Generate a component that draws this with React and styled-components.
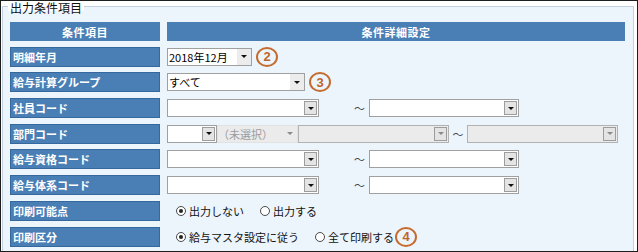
import React from "react";
import styled, { createGlobalStyle } from "styled-components";

const Global = createGlobalStyle`
  html, body { margin: 0; padding: 0; background: #fff; }
  body { font-family: "Noto Sans CJK JP", "Noto Sans", sans-serif; }
`;

const Frame = styled.div`
  width: 638px;
  height: 252px;
  box-sizing: border-box;
  border: 1px solid #1e1e1e;
  background: #fff;
  overflow: hidden;
`;

const Fieldset = styled.fieldset`
  margin: 0 3px 0 1px;
  padding: 11px 7px 8px 7px;
  border: 1px solid #c3d1de;
  background: #ecf4fc;
  min-width: 0;
`;

const Legend = styled.legend`
  margin-left: -2px;
  padding: 0 2px;
  height: 10px;
  font-size: 12px;
  line-height: 14px;
  color: #111;
  background: #fff;
`;

const Table = styled.div`
  display: grid;
  grid-template-columns: 150px 458px;
  grid-template-rows: 19px;
  grid-auto-rows: 20px;
  column-gap: 7px;
  row-gap: 5.7px;
`;

const HeadCell = styled.div`
  background: #4a7fb5;
  color: #fff;
  font-size: 11px;
  font-weight: 700;
  display: flex;
  align-items: center;
  justify-content: center;
  letter-spacing: 0.5px;
`;

const LabelCell = styled.div`
  box-sizing: border-box;
  background: #4a7fb5;
  border: 1px solid #35689c;
  color: #fff;
  font-size: 11px;
  font-weight: 700;
  display: flex;
  align-items: center;
  padding-left: 2px;
  white-space: nowrap;
`;

const ValueCell = styled.div`
  display: flex;
  align-items: center;
  font-size: 11px;
  color: #000;
`;

const SelectBox = styled.div`
  box-sizing: border-box;
  display: flex;
  align-items: stretch;
  width: ${(p) => p.$w}px;
  height: 18px;
  flex: none;
  border: 1px solid ${(p) => (p.$plain ? "#e2e2e2" : p.$disabled ? "#b2b2b2" : "#a0a0a0")};
  background: ${(p) => (p.$disabled ? "#ebebeb" : "#fff")};
  color: ${(p) => (p.$disabled ? "#9c9c9c" : "#000")};
  font-size: 11px;
`;

const SelectText = styled.span`
  flex: 1;
  min-width: 0;
  padding-left: ${(p) => p.$pad ?? 1}px;
  line-height: 16px;
  white-space: nowrap;
  overflow: hidden;
`;

const ArrowBtn = styled.span`
  flex: none;
  box-sizing: border-box;
  width: ${(p) => (p.$variant === "boxed" ? 13 : 14)}px;
  margin: ${(p) => (p.$variant === "boxed" ? "1px" : "0")};
  display: flex;
  align-items: center;
  justify-content: center;
  border: ${(p) => (p.$variant === "boxed" ? "1px solid #9d9d9d" : "none")};
  background: ${(p) =>
    p.$variant === "boxed" ? "#e4e4e4" : p.$variant === "flat" ? "#ececec" : "transparent"};
`;

const Tri = styled.span`
  width: 0;
  height: 0;
  border-left: 3px solid transparent;
  border-right: 3px solid transparent;
  border-top: 3px solid ${(p) => (p.$disabled ? "#8a8a8a" : "#111")};
`;

const Tilde = styled.span`
  width: ${(p) => p.$w}px;
  flex: none;
  text-align: ${(p) => (p.$center ? "center" : "right")};
  padding-right: ${(p) => (p.$center ? 0 : 4)}px;
  box-sizing: border-box;
  color: #444;
  font-size: 11px;
`;

const Badge = styled.span`
  box-sizing: border-box;
  flex: none;
  width: 22px;
  height: 20px;
  margin-left: ${(p) => p.$ml ?? 4}px;
  border: 2px solid #c56b2d;
  border-radius: 50%;
  color: #c0652a;
  font-family: "Liberation Sans", Arial, sans-serif;
  font-weight: 700;
  font-size: 13px;
  display: inline-flex;
  align-items: center;
  justify-content: center;
`;

const RadioGroup = styled.div`
  display: flex;
  align-items: center;
  padding-left: 9px;
`;

const RadioItem = styled.label`
  display: inline-flex;
  align-items: center;
  gap: 3px;
  margin-right: ${(p) => p.$mr ?? 16}px;
  font-size: 11px;
  color: #111;
  white-space: nowrap;
`;

const RadioDot = styled.span`
  box-sizing: border-box;
  width: 10px;
  height: 10px;
  border-radius: 50%;
  border: 1px solid #4a4a4a;
  background: #fff;
  display: inline-flex;
  align-items: center;
  justify-content: center;
  &::after {
    content: "";
    width: 4px;
    height: 4px;
    border-radius: 50%;
    background: #222;
    display: ${(p) => (p.$checked ? "block" : "none")};
  }
`;

function Select({ w, text = "", variant = "boxed", disabled, pad }) {
  return (
    <SelectBox $w={w} $disabled={disabled} $plain={variant === "plain"}>
      <SelectText $pad={pad}>{text}</SelectText>
      <ArrowBtn $variant={variant} $disabled={disabled}>
        <Tri $disabled={disabled} />
      </ArrowBtn>
    </SelectBox>
  );
}

function Range() {
  return (
    <ValueCell>
      <Select w={152} />
      <Tilde $w={50}>～</Tilde>
      <Select w={150} />
    </ValueCell>
  );
}

function Radio({ checked, children, mr }) {
  return (
    <RadioItem $mr={mr}>
      <RadioDot $checked={checked} />
      {children}
    </RadioItem>
  );
}

export default function App() {
  return (
    <>
      <Global />
      <Frame>
        <Fieldset>
          <Legend>出力条件項目</Legend>
          <Table>
            <HeadCell>条件項目</HeadCell>
            <HeadCell>条件詳細設定</HeadCell>

            <LabelCell>明細年月</LabelCell>
            <ValueCell>
              <Select w={85} text="2018年12月" variant="flat" />
              <Badge>2</Badge>
            </ValueCell>

            <LabelCell>給与計算グループ</LabelCell>
            <ValueCell>
              <Select w={138} text="すべて" variant="flat" />
              <Badge>3</Badge>
            </ValueCell>

            <LabelCell>社員コード</LabelCell>
            <Range />

            <LabelCell>部門コード</LabelCell>
            <ValueCell>
              <Select w={50} />
              <Select w={81} text="（未選択）" variant="plain" disabled pad={0} />
              <Select w={151} disabled />
              <Tilde $w={18} $center>～</Tilde>
              <Select w={151} disabled />
            </ValueCell>

            <LabelCell>給与資格コード</LabelCell>
            <Range />

            <LabelCell>給与体系コード</LabelCell>
            <Range />

            <LabelCell>印刷可能点</LabelCell>
            <ValueCell>
              <RadioGroup>
                <Radio checked>出力しない</Radio>
                <Radio>出力する</Radio>
              </RadioGroup>
            </ValueCell>

            <LabelCell>印刷区分</LabelCell>
            <ValueCell>
              <RadioGroup>
                <Radio checked>給与マスタ設定に従う</Radio>
                <Radio mr={0}>全て印刷する</Radio>
                <Badge $ml={1}>4</Badge>
              </RadioGroup>
            </ValueCell>
          </Table>
        </Fieldset>
      </Frame>
    </>
  );
}
